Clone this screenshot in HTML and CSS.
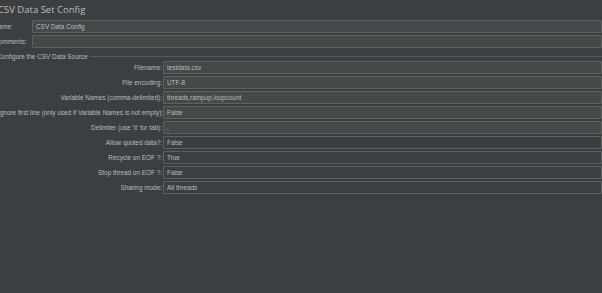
FILE: index.html
```html
<!DOCTYPE html>
<html lang="en">
<head>
    <meta charset="UTF-8">
    <title>CSV Data Set Config</title>
    <link rel="stylesheet" href="styles.css">
</head>
<body>
    <div class="panel">
        <div class="title">CSV Data Set Config</div>

        <div class="top-row">
            <label>Name:</label>
            <div class="field">CSV Data Config</div>
        </div>
        <div class="top-row">
            <label>Comments:</label>
            <div class="field"></div>
        </div>

        <fieldset class="source">
            <legend>Configure the CSV Data Source</legend>
            <div class="grid">
                <label>Filename:</label>
                <div class="field">testdata.csv</div>
                <label>File encoding:</label>
                <div class="field">UTF-8</div>
                <label>Variable Names (comma-delimited):</label>
                <div class="field">threads,rampup,loopcount</div>
                <label>Ignore first line (only used if Variable Names is not empty):</label>
                <div class="field">False</div>
                <label>Delimiter (use '\t' for tab):</label>
                <div class="field">,</div>
                <label>Allow quoted data?:</label>
                <div class="field combo">False</div>
                <label>Recycle on EOF ?:</label>
                <div class="field combo">True</div>
                <label>Stop thread on EOF ?:</label>
                <div class="field combo">False</div>
                <label>Sharing mode:</label>
                <div class="field combo">All threads</div>
            </div>
        </fieldset>
    </div>
</body>
</html>
```

FILE: styles.css
```css
body {
    margin: 0;
    background: #3c3f41;
    color: #bbbbbb;
    font-family: 'Liberation Sans', Arial, sans-serif;
    font-size: 6.4px;
    overflow: hidden;
}
.panel {
    margin-left: -6px;
    padding-top: 3px;
}
.title {
    font-family: 'Open Sans', 'Liberation Sans', sans-serif;
    font-size: 9.5px;
    height: 17px;
    padding-left: 4px;
}
.top-row {
    display: flex;
    align-items: center;
    margin-bottom: 2px;
}
.top-row label {
    width: 38px;
}
.field {
    flex: 1;
    height: 11px;
    line-height: 11px;
    background: #45494a;
    border: 1px solid #5e6162;
    border-radius: 1px;
    padding-left: 3px;
    white-space: nowrap;
}
.field.combo {
    background: #3c3f41;
}
.source {
    margin: 5px 0 0 4px;
    padding: 0;
    border: none;
    border-top: 1px solid #55585a;
}
.source legend {
    padding: 0 2px 0 0;
    margin-left: -1px;
}
.grid {
    display: grid;
    grid-template-columns: 164px 1fr;
    column-gap: 1px;
    row-gap: 2px;
    margin-top: 1px;
    align-items: center;
}
.grid label {
    text-align: right;
    white-space: nowrap;
}
```
